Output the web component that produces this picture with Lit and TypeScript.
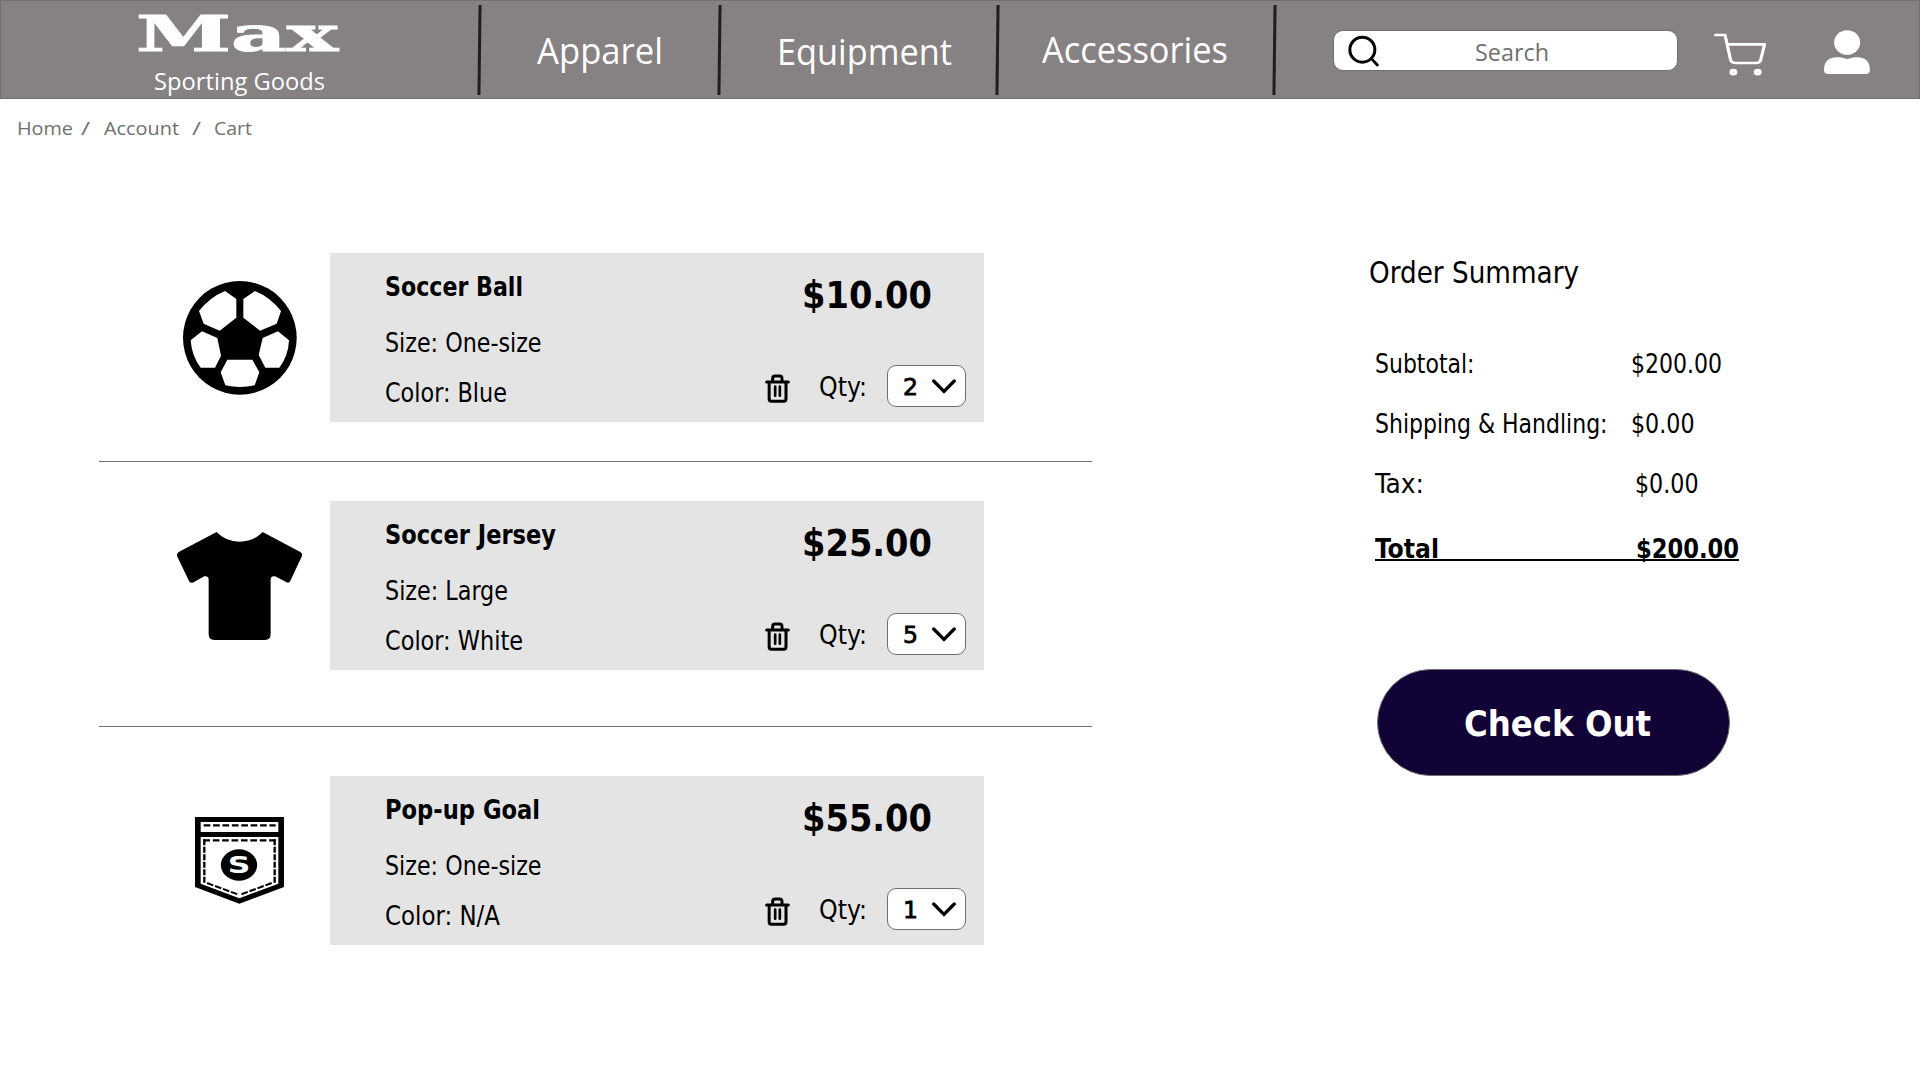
import { LitElement, html, css, svg } from "lit";
import { customElement, property } from "lit/decorators.js";

/** A line of text whose glyphs are condensed or widened to a given measure. */
@customElement("fit-text")
class FitText extends LitElement {
  @property() text = "";
  @property({ type: Number }) measure = 0;

  static styles = css`
    :host { display: block; white-space: pre; flex: none; }
    .ink { display: inline-block; transform-origin: 0 50%; vertical-align: top; }
  `;

  updated() {
    const ink = this.renderRoot.querySelector(".ink") as HTMLElement;
    ink.style.transform = "none";
    const natural = ink.offsetWidth ? ink.getBoundingClientRect().width : this.measure;
    ink.style.transform = `scaleX(${this.measure / natural})`;
    this.style.width = `${this.measure}px`;
  }

  render() {
    return html`<span class="ink">${this.text}</span>`;
  }
}

const ballIcon = svg`<svg width="113.7" height="113.7" viewBox="68 123 341 341">
  <path fill-rule="evenodd" d="M238.500 123a170.500 170.500 0 1 0 .01 0Z
    M194 153L228 177V233L178 272L130 251L116 213Q148 172 194 153Z
    M284 153L249 177V233L299 272L349 251L362 213Q330 172 284 153Z
    M125 274L171 294L182 347L164 383H121Q94 348 91 301Z
    M353 274L307 294L295 345L315 383H357Q384 348 386 301Z
    M201 359H276L297 397L283 436Q239 446 195 436L181 397Z"/></svg>`;

const jerseyIcon = svg`<svg width="125.3" height="108" viewBox="51 126 376 324">
  <path d="M170 126Q197 155 239 155Q280 155 308 126L421 186Q428 190 426 198L391 273Q387 280 380 277L345 259Q333 257 332 268V432Q332 450 315 450H163Q146 450 146 432V268Q145 257 133 259L98 278Q90 280 87 273L51 198Q50 190 56 186Z"/></svg>`;

const pocketIcon = svg`<svg width="89" height="86.7" viewBox="105 171 267 260">
  <path fill-rule="evenodd" d="M105 171H372V381L238 431L105 381Z M122 186H355V216H122Z M122 231H355V371L238 415L122 371Z"/>
  <g fill="none" stroke="#000" stroke-width="7">
    <path d="M131 196H347" stroke-dasharray="20 8.200"/>
    <path d="M130 241H347" stroke-dasharray="20 8.200"/>
    <path d="M133 238V368M344 238V368" stroke-dasharray="18 4.500"/>
    <path d="M141 369L233 403M335 369L244 403" stroke-dasharray="20 5.500" stroke-width="6"/>
  </g>
  <ellipse cx="237" cy="315" rx="54.500" ry="47"/>
  <text class="badge" x="203" y="340" textLength="68" lengthAdjust="spacingAndGlyphs">S</text></svg>`;

const trashIcon = svg`<svg class="trash" width="25" height="29" viewBox="74 402 75 87" fill="none" stroke="#000" stroke-width="9" stroke-linecap="round">
  <path d="M79 426H144M86.500 427V477Q86.500 484 93 484H130Q137 484 137 477V427M97 424V415Q97 408 104 408H118Q125 408 125 415V424"/>
  <path d="M104.500 440V467M118.500 440V467" stroke-width="8"/></svg>`;

const chevronIcon = svg`<svg width="24.300" height="14.300" viewBox="579 419 73 43">
  <path d="M584 425L615 456L646 425" fill="none" stroke="#000" stroke-width="10" stroke-linecap="round"/></svg>`;

interface Item {
  name: string; nameW: number;
  size: string; sizeW: number;
  color: string; colorW: number;
  price: string; qty: string; icon: unknown;
}

const items: Item[] = [
  { name: "Soccer Ball", nameW: 138, size: "Size: One-size", sizeW: 156.5, color: "Color: Blue", colorW: 122, price: "$10.00", qty: "2", icon: ballIcon },
  { name: "Soccer Jersey", nameW: 171, size: "Size: Large", sizeW: 123, color: "Color: White", colorW: 138, price: "$25.00", qty: "5", icon: jerseyIcon },
  { name: "Pop-up Goal", nameW: 155, size: "Size: One-size", sizeW: 156.5, color: "Color: N/A", colorW: 115, price: "$55.00", qty: "1", icon: pocketIcon },
];

@customElement("app-root")
class AppRoot extends LitElement {
  static styles = css`
    :host { display: block; width: 1920px; height: 1080px; overflow: hidden; background: #fff; color: #000;
      font-family: "DejaVu Sans Condensed", "DejaVu Sans", sans-serif; font-stretch: condensed; }
    svg { display: block; flex: none; overflow: visible; }
    .ui { font-family: "Open Sans", "Noto Sans", sans-serif; font-stretch: normal; }

    .bar { display: flex; height: 99px; background: #868182; box-shadow: inset 0 0 0 1px #707070; color: #fff; }
    .logo { width: 477.500px; flex: none; }
    .brand { margin-left: 136px; padding-top: 1px; font: bold 48px/67px "DejaVu Serif", serif; -webkit-text-stroke: 1px #fff; }
    .tag { margin-left: 153.500px; font-size: 24px; line-height: 26px; }
    .sep { flex: none; width: 3px; height: 90px; margin-top: 5px; background: #1e1e1e; transform: skewX(-0.7deg); }
    .cell { flex: none; width: 275px; box-sizing: border-box; font-size: 36px; line-height: 50px; }
    .apparel { width: 237px; padding: 26px 0 0 56px; }
    .equipment { padding: 27px 0 0 56px; }
    .accessories { width: 274px; padding: 25px 0 0 43px; }

    .search { flex: none; display: flex; box-sizing: border-box; width: 345.500px; height: 41px; margin: 30px 0 0 57.200px;
      background: #fff; border: 1px solid #707070; border-radius: 10px; color: #707070; font-size: 24px; line-height: 41px; }
    .lens { margin: 3.500px 0 0 13px; }
    .hint { margin-left: 95.500px; }
    .basket { margin: 32.700px 0 0 35.500px; }
    .person { margin: 29.700px 0 0 58px; }

    .crumbs { display: flex; padding: 16px 0 0 16.500px; font-size: 19px; line-height: 26px; color: #707070; }
    .c1 { margin-left: 8px; } .c2 { margin-left: 14px; } .c3 { margin-left: 13px; } .c4 { margin-left: 13.500px; }

    .page { display: flex; padding: 112px 0 0 99px; }
    .cart { width: 993px; flex: none; }
    .item { display: flex; height: 169px; }
    .thumb { display: flex; flex: none; width: 181px; padding-left: 50px; align-items: center; justify-content: center; }
    .rule { height: 1px; background: #707070; margin: 39px 0; }
    .rule.late { margin: 56px 0 49px; }
    .card { display: flex; width: 654px; background: #e4e4e4; }
    .info { width: 380px; flex: none; padding: 19px 0 0 55px; font-size: 26px; line-height: 30px; }
    .name { font-weight: bold; margin: 0 0 26px 0; }
    .line { margin: 0 0 20px 0; }
    .side { width: 201px; flex: none; }
    .price { margin: 23px 0 48px 36.500px; font-weight: bold; font-size: 37px; line-height: 40px; }
    .tools { display: flex; align-items: center; }
    .trash { margin-top: 4px; }
    .qty { margin: 2px 0 0 28.500px; font-size: 26px; line-height: 42px; }
    .pick { display: flex; flex: none; align-items: center; box-sizing: border-box; width: 79px; height: 42px; margin-left: auto;
      border: 1px solid #707070; border-radius: 9px; background: #fff; padding-left: 15px; }
    .num { font-family: "DejaVu Sans", sans-serif; font-stretch: normal; font-size: 23.500px; line-height: 42px; margin-top: 1px; -webkit-text-stroke: .8px #000; }
    .arrow { margin-left: 14px; }
    .badge { font: bold 69px "DejaVu Sans", sans-serif; fill: #fff; }

    .summary { margin-left: 283px; width: 370px; font-size: 26px; line-height: 30px; }
    .heading { margin: 4px 0 0 -6.500px; font-size: 30px; line-height: 32px; }
    .row { display: flex; margin-top: 30px; }
    .row.first { margin-top: 60px; }
    .row.total { margin-top: 35px; width: 364px; font-weight: bold; justify-content: space-between; height: 25px; line-height: 30px; border-bottom: 2px solid #000; }
    .label { width: 256px; flex: none; }
    .shift { margin-left: 4px; }
    .checkout { display: flex; box-sizing: border-box; width: 352.500px; height: 107px; margin: 108px 0 0 2px; padding: 0 0 0 86px; border: 1px solid #707070;
      border-radius: 54px; background: #110336; color: #fff; font: inherit; font-weight: bold; font-size: 36px; line-height: 108px; }
  `;

  private item(it: Item) {
    return html`<article class="item">
      <div class="thumb">${it.icon}</div>
      <div class="card">
        <div class="info">
          <fit-text class="name" .text=${it.name} .measure=${it.nameW}></fit-text>
          <fit-text class="line" .text=${it.size} .measure=${it.sizeW}></fit-text>
          <fit-text class="line" .text=${it.color} .measure=${it.colorW}></fit-text>
        </div>
        <div class="side">
          <fit-text class="price" .text=${it.price} .measure=${130}></fit-text>
          <div class="tools">
            ${trashIcon}
            <fit-text class="qty" .text=${"Qty:"} .measure=${48}></fit-text>
            <div class="pick"><fit-text class="num" .text=${it.qty} .measure=${15}></fit-text><span class="arrow">${chevronIcon}</span></div>
          </div>
        </div>
      </div>
    </article>`;
  }

  private amount(label: string, w: number, value: string, vw: number, cls = "", vcls = "") {
    return html`<div class="row ${cls}">
      <div class="label"><fit-text .text=${label} .measure=${w}></fit-text></div>
      <fit-text class=${vcls} .text=${value} .measure=${vw}></fit-text>
    </div>`;
  }

  render() {
    return html`
      <header class="bar ui">
        <div class="logo">
          <fit-text class="brand" .text=${"Max"} .measure=${202}></fit-text>
          <fit-text class="tag" .text=${"Sporting Goods"} .measure=${171}></fit-text>
        </div>
        <i class="sep"></i>
        <div class="cell apparel"><fit-text .text=${"Apparel"} .measure=${126}></fit-text></div>
        <i class="sep"></i>
        <div class="cell equipment"><fit-text .text=${"Equipment"} .measure=${175}></fit-text></div>
        <i class="sep"></i>
        <div class="cell accessories"><fit-text .text=${"Accessories"} .measure=${186}></fit-text></div>
        <i class="sep"></i>
        <div class="search">
          <svg class="lens" width="32.7" height="32.3" viewBox="1160 103 98 97" fill="none" stroke="#000" stroke-linecap="round">
            <circle cx="1206" cy="147" r="37.500" stroke-width="9"/><path d="M1233 174L1251 193" stroke-width="8.500"/></svg>
          <fit-text class="hint" .text=${"Search"} .measure=${74}></fit-text>
        </div>
        <svg class="basket" width="52.6" height="43.3" viewBox="1047 98 133 130" preserveAspectRatio="none" fill="none" stroke="#fff" stroke-width="8" stroke-linecap="round" stroke-linejoin="round">
          <path d="M1051 104H1075L1089 179Q1091 188 1103 188H1153Q1163 188 1165 179L1175 132H1083"/>
          <circle cx="1096" cy="215.500" r="5.500" stroke-width="9"/><circle cx="1157.500" cy="215.500" r="5.500" stroke-width="9"/></svg>
        <svg class="person" width="46.3" height="44.7" viewBox="1327 89 117 134" preserveAspectRatio="none" fill="#fff">
          <ellipse cx="1385.500" cy="126.500" rx="33" ry="37"/>
          <path d="M1338 221Q1327 221 1327 209Q1327 171 1360 171Q1372 170 1378 174Q1386 177 1394 174Q1400 170 1412 171Q1443 173 1443 209Q1443 221 1432 221Z"/></svg>
      </header>
      <nav class="crumbs ui">
        <fit-text .text=${"Home"} .measure=${56}></fit-text>
        <fit-text class="c1" .text=${"/"} .measure=${9}></fit-text>
        <fit-text class="c2" .text=${"Account"} .measure=${75}></fit-text>
        <fit-text class="c3" .text=${"/"} .measure=${9}></fit-text>
        <fit-text class="c4" .text=${"Cart"} .measure=${38}></fit-text>
      </nav>
      <main class="page">
        <section class="cart">
          ${this.item(items[0])}
          <div class="rule"></div>
          ${this.item(items[1])}
          <div class="rule late"></div>
          ${this.item(items[2])}
        </section>
        <aside class="summary">
          <fit-text class="heading" .text=${"Order Summary"} .measure=${210}></fit-text>
          ${this.amount("Subtotal:", 99.5, "$200.00", 91, "first")}
          ${this.amount("Shipping & Handling:", 232.5, "$0.00", 63.5)}
          ${this.amount("Tax:", 49, "$0.00", 63.5, "", "shift")}
          ${this.amount("Total", 64, "$200.00", 103, "total")}
          <button class="checkout"><fit-text .text=${"Check Out"} .measure=${187}></fit-text></button>
        </aside>
      </main>`;
  }
}
